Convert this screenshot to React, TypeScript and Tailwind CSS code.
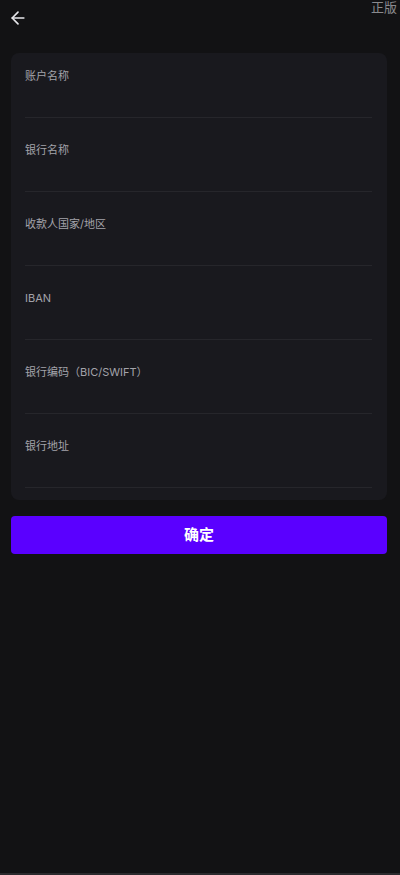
import { ArrowLeft } from "lucide-react";

const fields = ["账户名称", "银行名称", "收款人国家/地区", "IBAN", "银行编码（BIC/SWIFT）", "银行地址"];

export default function App() {
  return (
    <div
      className="relative min-h-[875px] bg-[#121214] flex flex-col"
      style={{ fontFamily: '"Inter", "Noto Sans CJK SC", sans-serif' }}
    >
      {/* watermark */}
      <span className="absolute right-[3px] top-[-2px] text-[13px] text-[#8a8a8e] leading-[18px]">正版</span>

      <div className="flex-1">
        <div className="h-[36px] flex items-center pl-[8px]">
          <ArrowLeft size={20} strokeWidth={2} className="text-[#e6e6ea]" />
        </div>

        <div className="ml-[11px] mr-[13px] mt-[17px] rounded-[8px] bg-[#19191e] pl-[14px] pr-[15px] pb-[12px]">
          {fields.map((label, i) => (
            <div
              key={label}
              className={`border-b border-[#26262b] ${i === 0 ? "pt-[13px]" : "pt-[22px]"}`}
            >
              <div className="text-[11px] leading-[20px] text-[#a3a3aa]">{label}</div>
              <input className="block w-full h-[31px] bg-transparent outline-none text-[13px] text-white" />
            </div>
          ))}
        </div>

        <div className="ml-[11px] mr-[13px] mt-[16px]">
          <button className="w-full h-[38px] rounded-[4px] bg-[#5a00ff] text-white text-[15px] font-bold">
            确定
          </button>
        </div>
      </div>

      <div className="h-[2px] bg-[#2a2a2d]" />
    </div>
  );
}
